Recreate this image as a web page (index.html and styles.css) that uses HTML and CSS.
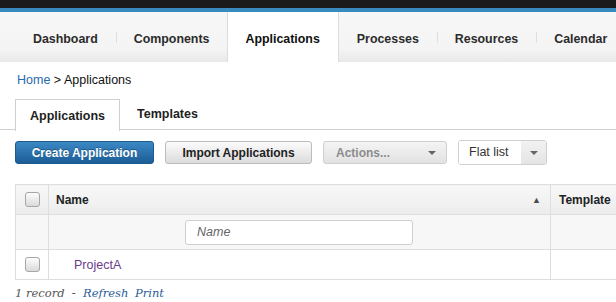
FILE: index.html
```html
<!doctype html>
<html lang="en">
    <head>
        <meta charset="UTF-8" />
        <title>Applications</title>
        <link rel="stylesheet" href="styles.css">
    </head>
    <body>
        <div class="topbar"></div>
        <nav class="mainnav">
            <a class="nav-item">Dashboard</a>
            <a class="nav-item sep">Components</a>
            <a class="nav-item active">Applications</a>
            <a class="nav-item">Processes</a>
            <a class="nav-item sep">Resources</a>
            <a class="nav-item sep">Calendar</a>
        </nav>

        <div class="breadcrumb"><a href="#">Home</a> &gt; Applications</div>

        <div class="subtabs">
            <div class="subtab active">Applications</div>
            <div class="subtab">Templates</div>
        </div>

        <div class="toolbar">
            <button class="btn btn-primary">Create Application</button>
            <button class="btn btn-import">Import Applications</button>
            <button class="btn btn-actions">Actions...<span class="caret"></span></button>
            <div class="split">
                <span class="split-label">Flat list</span>
                <span class="split-toggle"><span class="caret"></span></span>
            </div>
        </div>

        <table class="grid">
            <tr class="head">
                <th class="check-col"><span class="checkbox"></span></th>
                <th class="name-col">Name <span class="sort">&#9650;</span></th>
                <th class="tpl-col">Template</th>
            </tr>
            <tr class="filter">
                <td class="check-col"></td>
                <td class="name-col"><input type="text" class="filter-input" placeholder="Name" /></td>
                <td class="tpl-col"></td>
            </tr>
            <tr class="row">
                <td class="check-col"><span class="checkbox"></span></td>
                <td class="name-col"><a class="project" href="#">ProjectA</a></td>
                <td class="tpl-col"></td>
            </tr>
        </table>

        <div class="footer">
            1 record &nbsp;-&nbsp; <a href="#">Refresh</a> <a href="#">Print</a>
        </div>
    </body>
</html>
```

FILE: styles.css
```css
body {
    margin: 0;
    font-family: "Liberation Sans", Arial, sans-serif;
    color: #222;
    background: #fff;
    overflow: hidden;
}
a {
    text-decoration: none;
}
.topbar {
    height: 8px;
    background: #1b1b1b;
    border-bottom: 4px solid #3a8bbd;
}
.mainnav {
    display: flex;
    height: 50px;
    padding-left: 15px;
    background: linear-gradient(#f7f7f7, #f4f4f4 75%, #e8e8e8);
    white-space: nowrap;
}
.nav-item {
    position: relative;
    display: flex;
    align-items: center;
    padding: 3px 18px 0;
    font-size: 12.4px;
    font-weight: bold;
    color: #2b2b2b;
}
.nav-item.sep::before {
    content: "";
    position: absolute;
    left: 0;
    top: 20px;
    height: 11px;
    border-left: 1px solid #dedede;
}
.nav-item.active {
    background: #fff;
    border-left: 1px solid #dcdcdc;
    border-right: 1px solid #dcdcdc;
    padding: 3px 18px 0 17px;
    color: #111;
}
.breadcrumb {
    padding: 11px 17px 0;
    font-size: 12.5px;
    line-height: 15px;
    color: #111;
}
.breadcrumb a {
    color: #2a68ad;
}
.subtabs {
    display: flex;
    margin-top: 11px;
    padding-left: 15px;
    height: 30px;
    border-bottom: 1px solid #cfcfcf;
}
.subtab {
    padding: 0 17px;
    line-height: 30px;
    font-size: 12.5px;
    font-weight: bold;
    color: #1e1e1e;
}
.subtab.active {
    padding: 0 14px;
    background: #fff;
    border: 1px solid #cfcfcf;
    border-bottom: none;
    height: 31px;
    line-height: 32px;
}
.toolbar {
    display: flex;
    align-items: center;
    margin-top: 11px;
    padding-left: 15px;
    height: 23px;
}
.btn {
    height: 23px;
    border-radius: 3px;
    font-family: "Liberation Sans", Arial, sans-serif;
    font-size: 12px;
    font-weight: bold;
    padding: 0 14px;
    margin-right: 11px;
    border: 1px solid #bcbcbc;
    background: linear-gradient(#fbfbfb, #dcdcdc);
    color: #222;
}
.btn-primary {
    width: 139px;
    color: #fff;
    border-color: #1c5a90;
    background: linear-gradient(#3b88c4, #1c5d97);
    text-shadow: 0 -1px 0 rgba(0, 0, 0, 0.3);
}
.btn-import {
    width: 147px;
}
.btn-actions {
    display: flex;
    align-items: center;
    justify-content: space-between;
    width: 124px;
    padding: 0 10px 0 12px;
    color: #8c8c8c;
    border-color: #cfcfcf;
    background: linear-gradient(#f4f4f4, #e2e2e2);
}
.caret {
    display: inline-block;
    width: 0;
    height: 0;
    border-left: 4px solid transparent;
    border-right: 4px solid transparent;
    border-top: 4px solid #666;
}
.split {
    display: flex;
    height: 23px;
    border: 1px solid #d0d0d0;
    border-radius: 3px;
    overflow: hidden;
}
.split-label {
    width: 62px;
    padding-left: 10px;
    box-sizing: border-box;
    line-height: 23px;
    font-size: 12.5px;
    color: #333;
    background: #fff;
}
.split-toggle {
    display: flex;
    align-items: center;
    justify-content: center;
    width: 25px;
    background: linear-gradient(#f2f2f2, #e4e4e4);
}
.grid {
    margin: 20px 0 0 15px;
    width: 720px;
    border-collapse: collapse;
    font-size: 12px;
}
.grid th,
.grid td {
    border: 1px solid #dedede;
    padding: 0;
    text-align: left;
}
.head th {
    height: 29px;
    background: linear-gradient(#f8f8f8, #ececec);
    font-weight: bold;
    color: #222;
}
.check-col {
    width: 32px;
    text-align: center !important;
}
.name-col {
    width: 494px;
}
.head .name-col {
    padding-left: 7px;
    position: relative;
}
.sort {
    position: absolute;
    right: 9px;
    top: 10px;
    font-size: 9px;
    color: #4a4a4a;
}
.tpl-col {
    padding-left: 8px !important;
}
.checkbox {
    display: inline-block;
    width: 13px;
    height: 13px;
    border: 1px solid #a6a6a6;
    border-radius: 3px;
    background: linear-gradient(#fdfdfd, #dadada);
    vertical-align: middle;
}
.filter td {
    height: 34px;
    background: #f7f7f7;
}
.filter-input {
    display: block;
    margin-left: 136px;
    width: 228px;
    height: 25px;
    box-sizing: border-box;
    border: 1px solid #cfcfcf;
    border-radius: 3px;
    padding: 0 11px;
    font-family: "Liberation Sans", Arial, sans-serif;
    font-size: 12.5px;
    font-style: italic;
}
.filter-input::placeholder {
    color: #666;
}
.row td {
    height: 29px;
}
.project {
    margin-left: 25px;
    font-size: 12.5px;
    color: #6b3b8c;
}
.footer {
    padding: 6px 15px 0;
    font-family: "DejaVu Serif", Georgia, serif;
    font-style: italic;
    font-size: 11.5px;
    color: #555;
}
.footer a {
    color: #2b5c95;
    margin-right: 3px;
}
```
